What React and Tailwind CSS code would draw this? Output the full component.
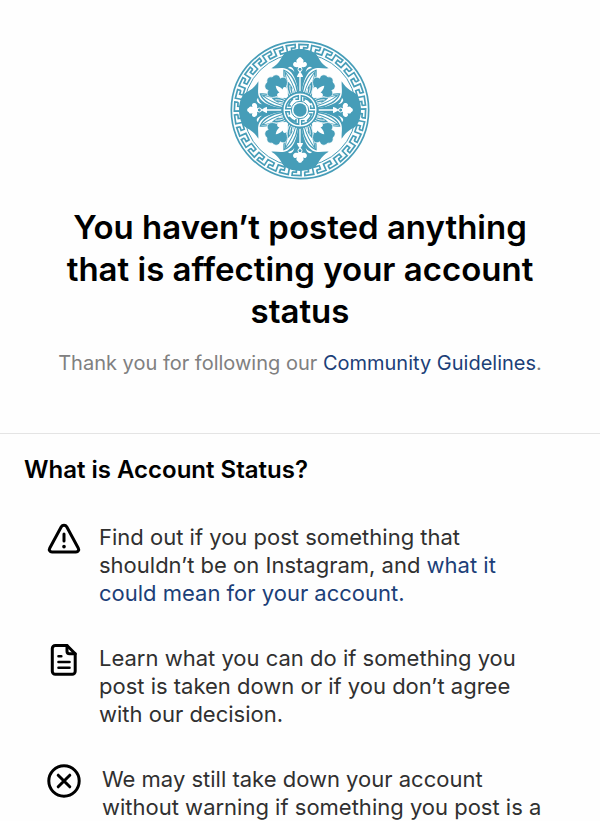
const BLUE = '#469db8';
const quarters = [0, 90, 180, 270];

function polar(angle, radius) {
  const a = (angle * Math.PI) / 180;
  return `${(radius * Math.sin(a)).toFixed(2)} ${(-radius * Math.cos(a)).toFixed(2)}`;
}

// One fret of the border: [share of the unit's angle, radius]
const fret = [
  [0.64, 187], [0.3, 187], [0.3, 177], [0.92, 177], [0.92, 197], [1.62, 197], [1.62, 187],
];

function fretPath(index, step) {
  return 'M' + fret.map(([u, r]) => polar((index + u) * step, r)).join('L');
}

function Medallion() {
  const count = 32;
  const step = 360 / count;
  return (
    <svg viewBox="-210 -210 420 420" className="size-[140px]" fill="none" role="img" aria-label="Floral medallion">
      <circle r="206" stroke={BLUE} strokeWidth="5" />
      <circle r="169" stroke={BLUE} strokeWidth="3" />
      <g stroke={BLUE} strokeWidth="5">
        {Array.from({ length: count }, (_, i) => (
          <path key={i} d={fretPath(i, step)} />
        ))}
      </g>

      {quarters.map((turn) => (
        <g key={turn} transform={`rotate(${turn + 45})`}>
          {[-1, 1].map((side) => (
            <g key={side} transform={`scale(${side} 1)`}>
              <path fill="#fff" stroke={BLUE} strokeWidth="4" d="M14-50C22-82 32-104 50-118C60-98 52-68 32-42Z" />
              <path stroke={BLUE} strokeWidth="3" d="M19-49C27-78 37-98 49-112M27-46C41-70 46-90 49-110" />
              <path fill={BLUE} d="M4-51C8-70 18-88 32-96C38-78 32-60 20-46Z" />
              <path stroke="#fff" strokeWidth="2.5" d="M9-52C13-66 20-76 30-86M15-50C18-60 24-68 31-74M19-48L29-62" />
            </g>
          ))}
          <path
            fill={BLUE}
            stroke="#fff"
            strokeWidth="2"
            d="M0-70C-14-76-33-80-37-93C-39-102-33-108-26-109C-32-121-22-131-11-129C-6-138 6-138 11-129C22-131 32-121 26-109C33-108 39-102 37-93C33-80 14-76 0-70Z"
          />
          <path fill="#fff" d="M0-54C-14-62-22-74-17-80C-14-84-9-83-7-80C-7-92-4-98 0-103C4-98 7-92 7-80C9-83 14-84 17-80C22-74 14-62 0-54Z" />
        </g>
      ))}

      {quarters.map((turn) => (
        <g key={turn} transform={`rotate(${turn})`}>
          <path
            fill={BLUE}
            d="M0-183C-18-183-36-178-47-169C-57-159-58-142-86-125C-68-124-51-129-38-122C-20-112-10-88-5-52H5C10-88 20-112 38-122C51-129 68-124 86-125C58-142 57-159 47-169C36-178 18-183 0-183Z"
          />
          <path
            fill="#fff"
            d="M-6-129C-16-126-23-133-20-140C-18-145-12-145-9-142C-14-150-7-154-6-154C-5-160 5-160 6-154C7-154 14-150 9-142C12-145 18-145 20-140C23-133 16-126 6-129L3-114H-3Z"
          />
          <circle cy="-122" r="6" fill={BLUE} stroke="#fff" strokeWidth="3" />
          <path fill="#fff" d="M-36-126C-29-135-19-126-17-114C-22-122-29-124-36-126ZM36-126C29-135 19-126 17-114C22-122 29-124 36-126ZM0-116C-5-109-9-103-9-99H-2V-56H2V-99H9C9-103 5-109 0-116Z" />
        </g>
      ))}

      <circle r="52" fill="#fff" stroke={BLUE} strokeWidth="5" />
      <circle r="20" fill={BLUE} />
      <circle r="26" stroke={BLUE} strokeWidth="3" />
      {quarters.map((turn) => (
        <g key={turn} transform={`rotate(${turn})`} stroke={BLUE} strokeWidth="4.5">
          <path d="M4-25V-43C24-41 40-26 43-5H32V-14M12-27V-35C20-33 28-28 33-21" />
        </g>
      ))}
    </svg>
  );
}

function WarningIcon() {
  return (
    <svg viewBox="0 0 36 36" className="size-9" fill="none" stroke="#000" strokeWidth="3" strokeLinecap="round" strokeLinejoin="round" aria-hidden="true">
      <path d="M15.300 5.700 3.800 27c-1.200 2.200.100 4 2.200 4h24c2.100 0 3.400-1.800 2.200-4L20.700 5.700c-1.200-2.100-4.200-2.100-5.400 0Z" />
      <path d="M18 13v7" />
      <path d="M18 25.600v.1" strokeWidth="3.600" />
    </svg>
  );
}

function DocumentIcon() {
  return (
    <svg viewBox="0 0 36 36" className="size-9" fill="none" stroke="#000" strokeWidth="3" strokeLinecap="round" strokeLinejoin="round" aria-hidden="true">
      <path d="M21 3.500H9.300a3 3 0 0 0-3 3v22.800a3 3 0 0 0 3 3h16.900a3 3 0 0 0 3-3V11.700Z" />
      <path d="M21 3.500v5.700a2.500 2.500 0 0 0 2.500 2.500h5.700" />
      <path d="M12.500 14.200h2.800M12.500 20h11M12.500 25.800h11" strokeWidth="2.600" />
    </svg>
  );
}

function CircleCrossIcon() {
  return (
    <svg viewBox="0 0 36 36" className="size-9" fill="none" stroke="#000" strokeWidth="3" strokeLinecap="round" aria-hidden="true">
      <circle cx="18" cy="18" r="15.200" />
      <path d="m12.200 12.200 11.600 11.600M23.800 12.200 12.200 23.800" />
    </svg>
  );
}

function InfoRow({ icon, gap = 'gap-[17px]', children }) {
  return (
    <li className={`flex ${gap}`}>
      <span className="shrink-0">{icon}</span>
      <p className="max-w-[450px] pt-0.5">{children}</p>
    </li>
  );
}

export default function App() {
  return (
    <main className="min-h-screen bg-[#fefefe] font-['Inter','Liberation_Sans',sans-serif] text-black">
      <header className="flex flex-col items-center border-b border-[#e4e4e4] px-12 pt-10 pb-14 text-center">
        <Medallion />
        <h1 className="mt-[26px] max-w-[480px] text-[33px] leading-[42px] font-semibold">
          You haven’t posted anything that is affecting your account status
        </h1>
        <p className="mt-[17px] text-[20px] leading-7 text-[#808080]">
          Thank you for following our <a href="#guidelines" className="text-[#1c3f78]">Community Guidelines</a>.
        </p>
      </header>
      <section className="px-6 pt-5">
        <h2 className="text-[24px] leading-8 font-semibold">What is Account Status?</h2>
        <ul className="mt-[35px] flex flex-col gap-[35px] pl-[22px] text-[22px] leading-7 text-[#303030]">
          <InfoRow icon={<WarningIcon />}>
            Find out if you post something that shouldn’t be on Instagram, and{' '}
            <a href="#meaning" className="text-[#1c3f78]">what it could mean for your account.</a>
          </InfoRow>
          <InfoRow icon={<DocumentIcon />}>
            Learn what you can do if something you post is taken down or if you don’t agree with our decision.
          </InfoRow>
          <InfoRow icon={<CircleCrossIcon />} gap="gap-5">
            We may still take down your account without warning if something you post is a
          </InfoRow>
        </ul>
      </section>
    </main>
  );
}
